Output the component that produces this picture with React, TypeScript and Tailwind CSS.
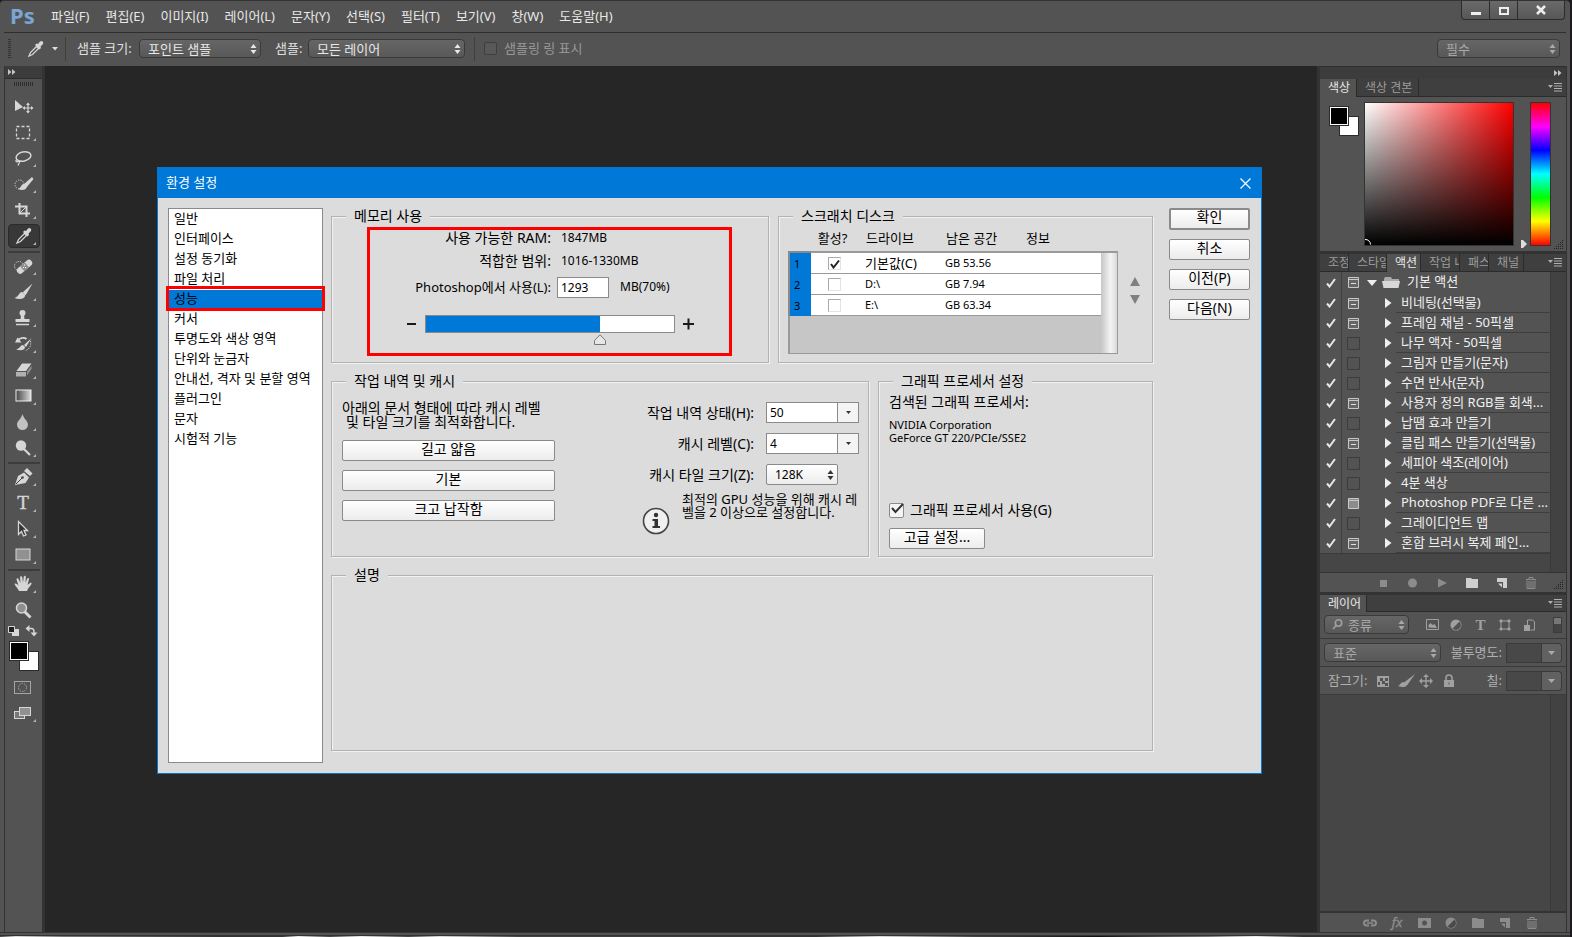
import React, { useState } from 'react';

const menus = ['파일(F)', '편집(E)', '이미지(I)', '레이어(L)', '문자(Y)', '선택(S)', '필터(T)', '보기(V)', '창(W)', '도움말(H)'];

const categories = [
  '일반', '인터페이스', '설정 동기화', '파일 처리', '성능', '커서', '투명도와 색상 영역',
  '단위와 눈금자', '안내선, 격자 및 분할 영역', '플러그인', '문자', '시험적 기능',
];

interface Action {
  name: string;
  dialog: 'lines' | 'plain' | 'none';
}

const actions: Action[] = [
  { name: '비네팅(선택물)', dialog: 'lines' },
  { name: '프레임 채널 - 50픽셀', dialog: 'lines' },
  { name: '나무 액자 - 50픽셀', dialog: 'none' },
  { name: '그림자 만들기(문자)', dialog: 'none' },
  { name: '수면 반사(문자)', dialog: 'none' },
  { name: '사용자 정의 RGB를 회색...', dialog: 'lines' },
  { name: '납땜 효과 만들기', dialog: 'none' },
  { name: '클립 패스 만들기(선택물)', dialog: 'lines' },
  { name: '세피아 색조(레이어)', dialog: 'none' },
  { name: '4분 색상', dialog: 'none' },
  { name: 'Photoshop PDF로 다른 ...', dialog: 'plain' },
  { name: '그레이디언트 맵', dialog: 'none' },
  { name: '혼합 브러시 복제 페인...', dialog: 'lines' },
];

const disks = [
  { name: '기본값(C)', free: 'GB 53.56', active: true },
  { name: 'D:\\', free: 'GB 7.94', active: false },
  { name: 'E:\\', free: 'GB 63.34', active: false },
];

const L = '#d6d6d6';

// Tool drawings, all on a 32x26 grid
const toolIcons: Record<string, React.ReactNode> = {
  move: (
    <>
      <path d="M7 7v11l8-4z" fill={L} />
      <path d="M20 10.500v9M15.500 15h9" stroke={L} strokeWidth="1.200" />
      <path d="M20 9.500l-2 2.500h4zM20 20.500l-2-2.500h4zM14.500 15l2.500-2v4zM25.500 15l-2.500-2v4z" fill={L} />
    </>
  ),
  marquee: <rect x="8.500" y="7.500" width="13" height="12" fill="none" stroke={L} strokeWidth="1.300" strokeDasharray="3 2" />,
  lasso: (
    <>
      <ellipse cx="15.500" cy="11.500" rx="7.500" ry="4.500" transform="rotate(-12 15.500 11.500)" fill="none" stroke={L} strokeWidth="1.500" />
      <path d="M9 14.500c-2 1-1 3 1 2s2 0 0 4" fill="none" stroke={L} strokeWidth="1.300" />
    </>
  ),
  quick: (
    <>
      <circle cx="11.500" cy="13.500" r="4.500" fill="none" stroke={L} strokeDasharray="1.200 1.200" />
      <path d="M24 6l-8.500 7.500 3 3 7-8.500z" fill={L} />
      <path d="M16 13c-3 0-2 3-6 5 5 2 9.500 .5 8.500-3z" fill={L} />
    </>
  ),
  crop: (
    <>
      <path d="M11.500 6v10.500H22M7 9.500h11.500V20" fill="none" stroke={L} strokeWidth="2" />
      <path d="M12 16l6-6" stroke={L} />
    </>
  ),
  eyedropper: (
    <>
      <path d="M9 20l1.500-3.500 6-6 2 2-6 6z" fill="none" stroke={L} strokeWidth="1.300" />
      <path d="M15 9l1.500-1.500L18 8l2-2.500c2-1.500 4 .5 3 2.500L20.500 10.500l.5 1.500-1.500 1.500z" fill={L} />
    </>
  ),
  heal: (
    <>
      <circle cx="11" cy="13" r="4.500" fill="none" stroke={L} strokeDasharray="1.200 1.200" />
      <rect x="7.500" y="10.500" width="18" height="6.500" rx="3.200" transform="rotate(-40 16.500 13.700)" fill={L} />
      <rect x="13.500" y="10.500" width="6" height="6.500" transform="rotate(-40 16.500 13.700)" fill="#8e8e8e" />
      <path d="M16 12h1M17 14.500h1M15 14.500h1" stroke="#fff" />
    </>
  ),
  brush: (
    <>
      <path d="M24.500 4.500L14.500 13.500l3 3z" fill={L} />
      <path d="M14 13c-3 0-3 4.500-7.500 6 4.500 2 11 1 10.500-3z" fill={L} />
    </>
  ),
  stamp: (
    <>
      <circle cx="14.500" cy="8" r="3" fill={L} />
      <path d="M13 10h3l.5 4h5v3h-14v-3h5z" fill={L} />
      <path d="M8 19.500h13" stroke={L} strokeWidth="1.500" />
    </>
  ),
  history: (
    <>
      <path d="M23.500 7l-7.500 7 2 2z" fill={L} />
      <path d="M15 14c-2.500 0-2.500 3-7 4.500 4 1.500 9 1 9-2.500z" fill={L} />
      <path d="M10 9c3-3 7-2.500 8.500-1" fill="none" stroke={L} strokeWidth="1.800" />
      <path d="M7 11.500h6.500l-4-5z" fill={L} />
      <path d="M22.500 10c1 4-1 9-5.500 9.500" fill="none" stroke={L} strokeDasharray="1.200 1.200" />
    </>
  ),
  eraser: (
    <>
      <path d="M14 6.500h9.500l-5.500 7.500H8.500z" fill={L} />
      <path d="M8 15h10v4.500H8z" fill="#b0b0b0" />
      <path d="M19 14.500l4.500-6v3.500l-4.500 6.500z" fill="#8e8e8e" />
    </>
  ),
  gradient: (
    <>
      <defs>
        <linearGradient id="toolGrad"><stop offset="0" stopColor="#444" /><stop offset="1" stopColor="#ddd" /></linearGradient>
      </defs>
      <rect x="8" y="7" width="15" height="11" fill="url(#toolGrad)" stroke="#eee" />
    </>
  ),
  blur: <path d="M14.500 5c1 4.500 5.500 7 5.500 10.500a5.500 5.500 0 0 1-11 0c0-3.500 4.500-6 5.500-10.500z" fill="#c2c2c2" />,
  dodge: (
    <>
      <circle cx="13" cy="10.500" r="5.200" fill={L} />
      <path d="M16 14l6 6" stroke={L} strokeWidth="2.200" />
    </>
  ),
  pen: (
    <>
      <path d="M7 21l3-9 6-3.500 5 5-3.500 5.500z" fill={L} />
      <path d="M16 7l3-3 5.500 5.500-2.500 2.500z" fill={L} />
      <path d="M8 20l6-6" stroke="#444" />
      <circle cx="14.500" cy="13.500" r="1.300" fill="#444" />
    </>
  ),
  path: <path d="M10.500 5.500v13l3-3 2 4.500 2.500-1-2-4.500h3.500z" fill="#333" stroke={L} strokeWidth="1.300" />,
  rect: <rect x="8" y="7" width="14" height="11" fill="#919191" stroke={L} />,
  hand: (
    <path
      d="M11 20c-1-3-4-5-4.500-7 1-1 2.500 0 4 1.500L8.500 8.500c0-1.500 1.500-1.500 2-.5l2 4L12 6c.5-1.300 2-1 2.200 0l.8 5.500.8-6c.5-1 2-1 2 .3L17.500 12l1.700-4.500c.7-1 2-.5 1.800.5l-1.500 6 2.500-2c1-.5 2 0 1.500 1-2 3-3.500 4-4.500 7z"
      fill={L}
    />
  ),
  zoom: (
    <>
      <path d="M16.500 14.500l6 6" stroke={L} strokeWidth="3" />
      <circle cx="13.500" cy="11" r="5" fill="#8e8e8e" stroke={L} strokeWidth="1.600" />
    </>
  ),
  mask: (
    <>
      <rect x="6.500" y="7.500" width="16" height="12" fill="none" stroke="#a5a5a5" />
      <circle cx="14.500" cy="13.500" r="4" fill="none" stroke="#a5a5a5" strokeDasharray="1.500 1" />
    </>
  ),
  screen: (
    <>
      <rect x="6.500" y="11.500" width="10" height="7" fill="#777" stroke={L} />
      <rect x="11.500" y="7.500" width="11" height="8" fill="#919191" stroke={L} />
    </>
  ),
};

const toolGroups = [
  ['move', 'marquee', 'lasso', 'quick', 'crop', 'eyedropper'],
  ['heal', 'brush', 'stamp', 'history', 'eraser', 'gradient', 'blur', 'dodge'],
  ['pen', 'type', 'path', 'rect'],
  ['hand', 'zoom'],
];
const noCorner = ['move', 'zoom', 'mask'];

function Tool({ name, active }: { name: string; active?: boolean }) {
  return (
    <button aria-label={name} className="relative flex h-[26px] w-8 items-center justify-center">
      {active && <span className="absolute inset-x-0 top-px bottom-px rounded-sm border border-[#2b2b2b] bg-[#383838]" />}
      <svg className="relative" width="32" height="26" viewBox="0 0 32 26">
        {name === 'type' ? (
          <text x="15" y="19" textAnchor="middle" fontSize="19" fill={L} stroke={L} strokeWidth="0.400" fontFamily="Liberation Serif, serif">T</text>
        ) : (
          toolIcons[name]
        )}
        {!noCorner.includes(name) && <path d="M28 19v3h-3z" fill="#b5b5b5" />}
      </svg>
    </button>
  );
}

function UpDown({ className = '' }: { className?: string }) {
  return (
    <svg className={`pointer-events-none absolute top-1/2 -translate-y-1/2 ${className}`} width="7" height="10" viewBox="0 0 7 10" fill="currentColor">
      <path d="M3.500 0l3 4h-6zM3.500 10l3-4h-6z" />
    </svg>
  );
}

interface DarkSelectProps {
  label: string;
  value: string;
  className: string;
  dim?: boolean;
  pad?: string;
}

function DarkSelect({ label, value, className, dim, pad = 'pl-2' }: DarkSelectProps) {
  return (
    <span className={`relative ${className} ${dim ? 'text-[#a8a8a8]' : 'text-[#e8e8e8]'}`}>
      <select
        id={label}
        aria-label={label}
        className={`block h-[19px] w-full appearance-none rounded-sm border border-[#3a3a3a] bg-linear-to-b from-[#666] to-[#585858] pr-4 text-[13px] leading-4 ${pad}`}
      >
        <option>{value}</option>
      </select>
      <UpDown className="right-1" />
    </span>
  );
}

function PanelMenu() {
  return (
    <button aria-label="패널 메뉴" className="mr-1 ml-auto self-center">
      <svg width="14" height="9" viewBox="0 0 14 9">
        <path d="M0 2h5L2.500 5z" fill="#b0b0b0" />
        <path d="M6 .5h8M6 3h8M6 5.500h8M6 8h8" stroke="#b0b0b0" />
      </svg>
    </button>
  );
}

function Grip() {
  return (
    <svg width="10" height="10" viewBox="0 0 10 10" fill="#222">
      {[0, 1, 2, 3, 4].map(r => Array.from({ length: r + 1 }, (_, c) => <rect key={`${r}-${c}`} x={8 - c * 2} y={r * 2} width="1" height="1" />))}
    </svg>
  );
}

function FooterIcon({ kind, bright }: { kind: string; bright?: boolean }) {
  const c = bright ? '#cfcfcf' : '#8c8c8c';
  return (
    <button aria-label={kind} className="flex w-[27px] justify-center">
      <svg className="overflow-visible" width="16" height="14" viewBox="0 0 16 14">
        {kind === 'stop' && <path d="M4 4h7v7H4z" fill={c} />}
        {kind === 'record' && <circle cx="7.500" cy="7" r="4.500" fill={c} />}
        {kind === 'play' && <path d="M3 2.500v9L12 7z" fill={c} />}
        {kind === 'folder' && <path d="M1 2h5l1 1h6v9H1z" fill={c} />}
        {kind === 'new' && (
          <>
            <path d="M2 2h10v10H8V6H2z" fill={c} />
            <path d="M3 7.500h4v4z" fill={c} />
          </>
        )}
        {kind === 'trash' && <path d="M2 3.500h10M5 3V1.500h4V3M3 4.500v8h8v-8M5 5v7M7 5v7M9 5v7" fill="none" stroke={c} />}
        {kind === 'link' && (
          <>
            <path d="M6 4.500H3.500a2.500 2.500 0 0 0 0 5H6M8 4.500h2.500a2.500 2.500 0 0 1 0 5H8" fill="none" stroke={c} strokeWidth="2" />
            <path d="M4 7h6" stroke={c} strokeWidth="1.500" />
          </>
        )}
        {kind === 'fx' && (
          <text x="7" y="11" textAnchor="middle" fontSize="13" fontStyle="italic" fill={c} stroke={c} strokeWidth="0.400" fontFamily="Noto Sans, sans-serif">fx</text>
        )}
        {kind === 'mask' && <path fillRule="evenodd" d="M1 2h13v10H1zM7.500 4.500a2.500 2.500 0 1 0 .01 0z" fill={c} />}
        {kind === 'adjust' && (
          <>
            <circle cx="7" cy="7" r="5.500" fill={c} />
            <path d="M10.500 3.500L3.500 10.500a4.500 4.500 0 0 0 7-7z" fill="#4a4a4a" />
          </>
        )}
      </svg>
    </button>
  );
}

function Swatches({ className = '' }: { className?: string }) {
  return (
    <div className={`relative h-[30px] w-[30px] ${className}`}>
      <span className="absolute right-0 bottom-0 size-5 border border-[#2b2b2b] bg-white" />
      <span className="absolute top-0 left-0 size-5 border border-[#2b2b2b] bg-black ring-1 ring-white ring-inset" />
    </div>
  );
}

function Toolbar() {
  return (
    <aside className="flex w-[41px] shrink-0 flex-col border-r-3 border-l border-[#333] bg-[#535353]">
      <div className="flex h-[13px] items-center border-b border-[#2e2e2e] bg-[#3c3c3c] pl-[3px]">
        <svg width="8" height="6" viewBox="0 0 8 6" fill="#c4c4c4"><path d="M0 0v6l3.500-3zM4 0v6l3.500-3z" /></svg>
      </div>
      <div className="mx-auto mt-[3px] h-1 w-5 bg-[repeating-linear-gradient(90deg,#2e2e2e_0_1px,#535353_1px_2px)]" />
      <div className="flex flex-col items-center pt-[7px]">
        {toolGroups.map((group, i) => (
          <div key={i} className={i > 0 ? 'mt-px border-t-2 border-[#3c3c3c]' : 'mb-px'}>
            {group.map(t => <Tool key={t} name={t} active={t === 'eyedropper'} />)}
          </div>
        ))}
        <svg width="32" height="15" viewBox="0 0 32 15">
          <path d="M4 6h7v7H4z" fill={L} />
          <path d="M.5 3.500h6v6h-6z" fill="#222" stroke={L} />
          <path d="M20 5.500h3.500q2.500 0 2.500 3V11" fill="none" stroke={L} strokeWidth="1.400" />
          <path d="M17.500 5.500l4-3.500v7zM26 13.500l3.500-4h-7z" fill={L} />
        </svg>
        <Swatches className="mt-[3px]" />
        <div className="mt-[3px] flex flex-col">
          <Tool name="mask" />
          <Tool name="screen" />
        </div>
      </div>
    </aside>
  );
}

function Tab({ text, active, width }: { text: string; active?: boolean; width: string }) {
  return (
    <button
      className={`overflow-hidden border-r border-[#2b2b2b] pl-2 text-left text-xs leading-4 whitespace-nowrap ${width} ${
        active ? 'bg-[#535353] text-[#e8e8e8]' : 'border-b text-[#9c9c9c]'
      }`}
    >
      {text}
    </button>
  );
}

function ColorPanel() {
  return (
    <section className="bg-[#535353]">
      <div className="flex h-[18px] bg-[#3f3f3f]">
        <Tab text="색상" active width="w-[37px]" />
        <Tab text="색상 견본" width="w-[62px]" />
        <div className="flex flex-1 border-b border-[#2b2b2b]"><PanelMenu /></div>
      </div>
      <div className="flex h-[154px] pt-[5px] pl-[9px]">
        <Swatches className="mt-1" />
        <div className="relative ml-[5px] h-[144px] flex-1 border border-[#333] bg-[linear-gradient(to_top,#000,transparent),linear-gradient(to_right,#fff,#f00)]">
          <svg className="absolute bottom-0 left-0" width="7" height="7" viewBox="0 0 7 7"><path d="M0 1.500a5 5 0 0 1 5.500 5" fill="none" stroke="#fff" /></svg>
        </div>
        <svg className="ml-[6px] self-end" width="8" height="12" viewBox="0 0 8 12"><path d="M1 1h2l4 4-4 4H1z" fill="#ddd" /></svg>
        <div className="ml-[2px] h-[144px] w-[21px] border border-[#333] bg-[linear-gradient(#f00,#f0f,#00f,#0ff,#0f0,#ff0,#f00)]" />
        <div className="mb-px flex w-[15px] items-end justify-end pr-0.5"><Grip /></div>
      </div>
    </section>
  );
}

function ActionToggles({ name, dialog }: Action) {
  return (
    <>
      <label className="relative flex w-[22px] shrink-0 items-center justify-center border-r border-[#3e3e3e]">
        <input type="checkbox" defaultChecked aria-label={name} className="size-3 appearance-none" />
        <svg className="pointer-events-none absolute" width="10" height="10" viewBox="0 0 10 10">
          <path d="M1 5.500l2.500 3L9 1" fill="none" stroke="#e6e6e6" strokeWidth="2" />
        </svg>
      </label>
      <button aria-label={`${name} 대화 상자`} className="flex w-[22px] shrink-0 items-center justify-center">
        <svg width="13" height="13" viewBox="0 0 13 13">
          {dialog === 'none' ? (
            <path d="M.5.5h12v12H.5z" fill="none" stroke="#3c3c3c" />
          ) : (
            <>
              <path d="M1.500 1.500h10v10h-10z" fill={dialog === 'plain' ? '#8c8c8c' : '#666'} stroke="#c8c8c8" />
              <path d="M1.500 3.500h10" stroke="#c8c8c8" />
              {dialog === 'lines' && <path d="M4 7.500h5" stroke="#e0e0e0" />}
            </>
          )}
        </svg>
      </button>
    </>
  );
}

function ActionsPanel() {
  return (
    <section className="bg-[#535353]">
      <div className="flex h-[18px] bg-[#3f3f3f]">
        <Tab text="조정" width="w-[29px]" />
        <Tab text="스타일" width="w-[38px]" />
        <Tab text="액션" active width="w-[34px]" />
        <Tab text="작업 내역" width="w-[39px]" />
        <Tab text="패스" width="w-[29px]" />
        <Tab text="채널" width="w-[35px]" />
        <div className="flex flex-1 border-b border-[#2b2b2b]"><PanelMenu /></div>
      </div>
      <div className="flex h-[300px] bg-[#464646]">
        <div className="flex-1">
          <ul className="border-b border-[#3a3a3a] bg-[#535353] text-[13px] leading-[19px] text-[#f0f0f0]">
            <li className="flex h-[21px]">
              <ActionToggles name="기본 액션" dialog="lines" />
              <svg className="mt-[5px] ml-[3px]" width="36" height="12" viewBox="0 0 36 12">
                <path d="M0 3h10L5 9z" fill="#eee" />
                <path d="M17 2l1-2h6l1 2h7v2H17z" fill="#aaa" />
                <path d="M15 4h18l-1.500 7h-15z" fill="#d8d8d8" />
              </svg>
              <span className="pl-1">기본 액션</span>
            </li>
            {actions.map(a => (
              <li key={a.name} className="flex h-5">
                <ActionToggles {...a} />
                <svg className="mt-[5px] ml-[21px]" width="7" height="10" viewBox="0 0 7 10"><path d="M0 0v10l6.500-5z" fill="#eee" /></svg>
                <span className="ml-1 flex-1 border-b border-[#3e3e3e] pl-[5px] whitespace-nowrap">{a.name}</span>
              </li>
            ))}
          </ul>
        </div>
        <div className="w-4 border-l border-[#3a3a3a] bg-[#424242]" />
      </div>
      <div className="flex h-5 items-center border-t border-[#333]">
        <div className="ml-[50px] flex flex-1 justify-between">
          <FooterIcon kind="stop" />
          <FooterIcon kind="record" />
          <FooterIcon kind="play" />
          <FooterIcon kind="folder" bright />
          <FooterIcon kind="new" bright />
          <FooterIcon kind="trash" />
        </div>
        <div className="ml-2 flex h-full w-3 items-end pb-0.5"><Grip /></div>
      </div>
    </section>
  );
}

function Percent({ label, id }: { label: string; id: string }) {
  return (
    <div className="ml-auto flex items-center">
      <label htmlFor={id} className="mr-1 text-[13px] text-[#b0b0b0]">{label}</label>
      <input id={id} className="h-5 w-9 border border-[#3a3a3a] bg-[#484848]" />
      <button aria-label={`${label} 열기`} className="flex h-5 w-5 items-center justify-center rounded-r-sm border border-l-0 border-[#3a3a3a] bg-[#616161]">
        <svg width="7" height="4" viewBox="0 0 7 4"><path d="M0 0h7L3.500 4z" fill="#aaa" /></svg>
      </button>
    </div>
  );
}

function LayersPanel() {
  const g = '#a0a0a0';
  return (
    <section className="flex flex-1 flex-col bg-[#535353]">
      <div className="flex h-[17px] shrink-0 bg-[#3f3f3f]">
        <Tab text="레이어" active width="w-[47px]" />
        <div className="flex flex-1 border-b border-[#2b2b2b]"><PanelMenu /></div>
      </div>
      <div className="flex h-[26px] shrink-0 items-center px-1 pb-px">
        <div className="relative text-[#a8a8a8]">
          <DarkSelect label="필터 종류" value="종류" className="block w-[85px]" dim pad="pl-[23px]" />
          <svg className="pointer-events-none absolute top-1 left-2" width="11" height="11" viewBox="0 0 11 11" fill="none" stroke={g} strokeWidth="1.600">
            <circle cx="6.500" cy="4" r="3.200" />
            <path d="M4 6.500L1 10" />
          </svg>
        </div>
        <svg className="ml-[17px]" width="110" height="14" viewBox="0 0 110 14" fill="none" stroke={g}>
          <path d="M.5 1.500h12v10H.5z" />
          <path d="M2.500 9.500V7l2-2 2 2 2-1 2 3v1z" fill={g} stroke="none" />
          <circle cx="30" cy="7" r="5.500" fill={g} stroke="none" />
          <path d="M33.500 3.500L26.500 10.500a4.500 4.500 0 0 0 7-7z" fill="#535353" stroke="none" />
          <text x="54.500" y="12" textAnchor="middle" fontSize="15" fontWeight="bold" fill={g} stroke="none" fontFamily="Liberation Serif, serif">T</text>
          <path d="M75 3h8v8h-8z" />
          <path d="M74 2h2v2h-2zM82 2h2v2h-2zM74 10h2v2h-2zM82 10h2v2h-2z" fill={g} />
          <path d="M101.500 7V2h5l2 2v8h-4" />
          <path d="M98 7h6v6h-6z" fill={g} stroke="none" />
        </svg>
        <button aria-label="필터 켜기/끄기" className="ml-auto h-4 w-[9px] border border-[#3c3c3c] bg-[linear-gradient(#777_45%,#444_45%)]" />
      </div>
      <div className="flex h-7 shrink-0 items-center border-t border-[#3a3a3a] px-1">
        <DarkSelect label="혼합 모드" value="표준" className="block w-[117px]" dim />
        <Percent label="불투명도:" id="opacity" />
      </div>
      <div className="flex h-[29px] shrink-0 items-center border-y border-[#3a3a3a] px-1">
        <span className="pl-1 text-[13px] text-[#b0b0b0]">잠그기:</span>
        <svg className="ml-2.5" width="80" height="14" viewBox="0 0 80 14" fill={g}>
          <path d="M0 2h12v11H0z" />
          <path d="M3 4h3v3H3zM8 4h3v3H8zM5 7h3v3H5zM1 8h2v3H1zM8 9h3v3H8z" fill="#535353" />
          <path d="M38 0L27 8.500l3 3zM26.500 8c-3 0-3 3-5.500 4 4 2 9.500 1 8.500-1.500z" />
          <path d="M49 1v12M43 7h12" stroke={g} strokeWidth="1.300" />
          <path d="M49 0l-3 3h6zM49 14l-3-3h6zM42 7l3-3v6zM56 7l-3-3v6z" />
          <path fillRule="evenodd" d="M67 6h10v7H67zM71.500 8.500v2h1v-2z" />
          <path d="M69 6V4a3 3 0 0 1 6 0v2" fill="none" stroke={g} strokeWidth="1.600" />
        </svg>
        <Percent label="칠:" id="fill" />
      </div>
      <div className="flex flex-1 justify-end bg-[#464646]">
        <div className="w-4 border-l border-[#3a3a3a] bg-[#424242]" />
      </div>
      <div className="flex h-[21px] shrink-0 items-center border-t-2 border-[#333] pl-[37px]">
        {['link', 'fx', 'mask', 'adjust', 'folder', 'new', 'trash'].map(k => <FooterIcon key={k} kind={k} />)}
      </div>
    </section>
  );
}

function Group({ title, className = '', children }: { title: string; className?: string; children?: React.ReactNode }) {
  return (
    <fieldset className={`min-w-0 border border-[#b2b2b2] shadow-[1px_1px_0_#f2f2f2,inset_1px_1px_0_#f2f2f2] ${className}`}>
      <legend className="ml-3.5 bg-[#dcdcdc] px-2 text-sm leading-4">{title}</legend>
      {children}
    </fieldset>
  );
}

const lightBtn = 'flex items-center justify-center rounded-[2px] border border-[#8a8a8a] bg-linear-to-b from-white to-[#ececec] pb-1 text-sm leading-4';

function Combo({ id, label, value }: { id: string; label: string; value: string }) {
  return (
    <div className="flex items-center justify-end">
      <label htmlFor={id} className="mr-3 text-sm leading-5">{label}</label>
      <input id={id} defaultValue={value} className="h-[21px] w-[72px] border border-[#8a8a8a] bg-white px-[3px] text-xs" />
      <button aria-label={`${label} 열기`} className="flex h-[21px] w-[21px] items-center justify-center border border-l-0 border-[#8a8a8a] bg-[#f4f4f4]">
        <svg width="5" height="3" viewBox="0 0 5 3"><path d="M0 0h5L2.500 3z" fill="#333" /></svg>
      </button>
    </div>
  );
}

function MemoryGroup() {
  const [used, setUsed] = useState(70);
  return (
    <Group title="메모리 사용" className="relative h-[155px] w-[438px]">
      <div className="pointer-events-none absolute top-[3px] left-[35px] h-[129px] w-[365px] border-3 border-[#f00]" />
      <div className="grid grid-cols-[219px_1fr] items-center gap-x-2.5 pt-0.5">
        <span className="text-right text-sm leading-[23px]">사용 가능한 RAM:</span>
        <span className="text-xs">1847MB</span>
        <span className="text-right text-sm leading-[23px]">적합한 범위:</span>
        <span className="text-xs">1016-1330MB</span>
        <label htmlFor="ram" className="text-right text-[13px] leading-[30px]">Photoshop에서 사용(L):</label>
        <span className="-ml-1 flex items-center text-xs">
          <input id="ram" defaultValue="1293" className="mr-[11px] h-[21px] w-[52px] border border-[#8a8a8a] bg-white px-[3px]" />
          MB(70%)
        </span>
      </div>
      <div className="mt-[13px] ml-[74px] flex items-center gap-2">
        <button aria-label="줄이기" onClick={() => setUsed(Math.max(0, used - 1))}>
          <svg width="11" height="12" viewBox="0 0 11 12"><path d="M1 6h9" stroke="#1a1a1a" strokeWidth="2" /></svg>
        </button>
        <div className="relative">
          <input
            type="range"
            aria-label="Photoshop에서 사용"
            value={used}
            onChange={e => setUsed(Number(e.target.value))}
            className="block h-[18px] w-[250px] appearance-none border border-[#8a8a8a] [&::-webkit-slider-thumb]:opacity-0"
            style={{ background: `linear-gradient(to right, #0078d7 ${used}%, #fff ${used}%)` }}
          />
          <svg className="pointer-events-none absolute top-[19px] -translate-x-1/2" style={{ left: `${used}%` }} width="12" height="11" viewBox="0 0 12 11">
            <path d="M.5 10.500v-4L6 .8l5.500 5.700v4z" fill="#e6e6e6" stroke="#777" />
          </svg>
        </div>
        <button aria-label="늘리기" onClick={() => setUsed(Math.min(100, used + 1))}>
          <svg width="11" height="12" viewBox="0 0 11 12"><path d="M0 6h11M5.500.5v11" stroke="#1a1a1a" strokeWidth="2" /></svg>
        </button>
      </div>
    </Group>
  );
}

function DiskGroup() {
  return (
    <Group title="스크래치 디스크" className="h-[155px] w-[375px]">
      <div className="flex pt-1 pl-[9px]">
        <table className="w-[330px] table-fixed border-separate border-spacing-0 text-[11px]">
          <colgroup>
            <col className="w-[23px]" />
            <col className="w-[47px]" />
            <col className="w-20" />
            <col className="w-20" />
            <col />
            <col className="w-[17px]" />
          </colgroup>
          <thead className="text-[13px] leading-5">
            <tr className="h-[23px] align-top">
              <td />
              <th className="pr-1 font-normal whitespace-nowrap">활성?</th>
              <th className="pl-2 text-left font-normal">드라이브</th>
              <th className="pl-2 text-left font-normal">남은 공간</th>
              <th className="pl-2 text-left font-normal">정보</th>
              <td />
            </tr>
          </thead>
          <tbody>
            {disks.map((d, i) => (
              <tr key={d.name} className={`bg-white leading-4 ${i === 0 ? 'h-[23px]' : 'h-[21px]'}`}>
                <th scope="row" className={`border-l-2 border-[#8a8a8a] bg-[#0078d7] pl-1 text-left font-normal ${i === 0 ? 'border-t-2' : ''}`}>{i + 1}</th>
                <td className={`border-b border-[#9a9a9a] ${i === 0 ? 'border-t-2' : ''}`}>
                  <label className="relative mx-auto block size-[13px]">
                    <input type="checkbox" defaultChecked={d.active} aria-label={d.name} className="block size-[13px] appearance-none border border-t-[#aaa] border-r-[#e4e4e4] border-b-[#e4e4e4] border-l-[#aaa]" />
                    {d.active && (
                      <svg className="pointer-events-none absolute top-0.5 left-0.5" width="10" height="10" viewBox="0 0 10 10"><path d="M1 5l2.500 3.500L9 1.500" fill="none" stroke="#222" strokeWidth="2" /></svg>
                    )}
                  </label>
                </td>
                <td className={`border-b border-[#9a9a9a] pl-[7px] ${i === 0 ? 'border-t-2 text-[13px]' : ''}`}>{d.name}</td>
                <td className={`border-b border-[#9a9a9a] pl-[7px] ${i === 0 ? 'border-t-2' : ''}`}>{d.free}</td>
                <td className={`border-b border-[#9a9a9a] ${i === 0 ? 'border-t-2' : ''}`} />
                {i === 0 && <td rowSpan={4} className="border border-t-2 border-l-0 border-[#9a9a9a] bg-[linear-gradient(to_right,#c6c6c6,#f4f4f4_60%,#d8d8d8)]" />}
              </tr>
            ))}
            <tr className="h-[38px] bg-[#c6c6c6]">
              <td colSpan={5} className="border-b border-l-2 border-[#9a9a9a]" />
            </tr>
          </tbody>
        </table>
        <div className="mt-[49px] ml-3 flex flex-col gap-[9px] text-[#808080]">
          <button aria-label="위로"><svg width="10" height="9" viewBox="0 0 10 9" fill="currentColor"><path d="M5 0l5 9H0z" /></svg></button>
          <button aria-label="아래로"><svg width="10" height="9" viewBox="0 0 10 9" fill="currentColor"><path d="M5 9l5-9H0z" /></svg></button>
        </div>
      </div>
    </Group>
  );
}

function HistoryGroup() {
  return (
    <Group title="작업 내역 및 캐시" className="h-[184px] w-[538px]">
      <div className="flex justify-between pr-[9px] pl-2.5">
        <div className="w-[213px] pt-3">
          <p className="text-sm leading-3.5 whitespace-nowrap">아래의 문서 형태에 따라 캐시 레벨</p>
          <p className="pl-1 text-sm leading-3.5 whitespace-nowrap">및 타일 크기를 최적화합니다.</p>
          <div className="mt-[11px] flex flex-col gap-[9px]">
            <button className={`${lightBtn} h-[21px]`}>길고 얇음</button>
            <button className={`${lightBtn} h-[21px]`}>기본</button>
            <button className={`${lightBtn} h-[21px]`}>크고 납작함</button>
          </div>
        </div>
        <div className="flex w-[220px] flex-col gap-2.5 pt-[13px]">
          <Combo id="states" label="작업 내역 상태(H):" value="50" />
          <Combo id="levels" label="캐시 레벨(C):" value="4" />
          <div className="flex items-center justify-end pr-[21px]">
            <label htmlFor="tile" className="mr-3 text-sm leading-5">캐시 타일 크기(Z):</label>
            <span className="relative">
              <select id="tile" className="block h-[21px] w-[72px] appearance-none rounded-[2px] border border-[#8a8a8a] bg-linear-to-b from-white to-[#ececec] pl-2 text-xs">
                <option>128K</option>
              </select>
              <UpDown className="right-1 text-[#333]" />
            </span>
          </div>
          <div className="-mt-0.5 flex gap-3 pl-[3px]">
            <svg className="mt-3.5 shrink-0" width="28" height="28" viewBox="0 0 28 28">
              <circle cx="14" cy="14" r="12.500" fill="#f0f0f0" stroke="#444" strokeWidth="1.600" />
              <circle cx="14" cy="8" r="2.200" fill="#333" />
              <path d="M10.500 12H16v7h2v2h-7.500v-2h2v-5h-2z" fill="#333" />
            </svg>
            <p className="text-[13px] leading-[13px] whitespace-nowrap">최적의 GPU 성능을 위해 캐시 레<br />벨을 2 이상으로 설정합니다.</p>
          </div>
        </div>
      </div>
    </Group>
  );
}

function GpuGroup() {
  return (
    <Group title="그래픽 프로세서 설정" className="h-[184px] w-[275px]">
      <div className="flex h-[168px] flex-col items-start pt-1 pb-2 pl-2.5">
        <span className="text-sm leading-[18px]">검색된 그래픽 프로세서:</span>
        <p className="mt-[7px] text-[11px] leading-[13px]">NVIDIA Corporation<br />GeForce GT 220/PCIe/SSE2</p>
        <label className="relative mt-auto flex items-center gap-1.5 text-sm leading-5">
          <input type="checkbox" defaultChecked className="size-[15px] appearance-none rounded-[2px] border border-[#8a8a8a] bg-[#f4f4f4]" />
          <svg className="pointer-events-none absolute top-[3px] left-0.5" width="13" height="12" viewBox="0 0 13 12"><path d="M1 5l3.500 4L12 1" fill="none" stroke="#333" strokeWidth="2" /></svg>
          그래픽 프로세서 사용(G)
        </label>
        <button className={`${lightBtn} mt-2 h-[21px] w-24`}>고급 설정...</button>
      </div>
    </Group>
  );
}

function PreferencesDialog() {
  const [selected, setSelected] = useState('성능');
  return (
    <div role="dialog" aria-label="환경 설정" className="absolute top-[167px] left-[157px] w-[1105px] border border-[#0078d7] bg-[#dcdcdc] text-black">
      <div className="flex h-[30px] items-center justify-between bg-[#0078d7] pr-2.5 pl-2 text-[13px] text-white">
        환경 설정
        <button aria-label="닫기"><svg width="11" height="11" viewBox="0 0 11 11"><path d="M.5.5l10 10M10.500.5l-10 10" stroke="#fff" strokeWidth="1.200" /></svg></button>
      </div>
      <div className="flex pt-2.5 pr-[11px] pb-2.5 pl-2.5">
        <ul className="w-[155px] shrink-0 border border-[#8a8a8a] bg-white text-[13px]">
          {categories.map(c => (
            <li key={c} className="relative py-px">
              <button onClick={() => setSelected(c)} className={`flex h-[18px] w-full items-center pb-0.5 pl-[5px] text-left leading-4 whitespace-nowrap ${c === selected ? 'bg-[#0078d7]' : ''}`}>{c}</button>
              {c === selected && <span className="pointer-events-none absolute -inset-x-[3px] -top-[3px] -bottom-0.5 border-3 border-[#f00]" />}
            </li>
          ))}
        </ul>
        <div className="mb-3 ml-2 flex flex-1 flex-col gap-2.5">
          <div className="flex justify-between">
            <MemoryGroup />
            <DiskGroup />
          </div>
          <div className="flex justify-between">
            <HistoryGroup />
            <GpuGroup />
          </div>
          <Group title="설명" className="h-[184px]" />
        </div>
        <div className="ml-4 flex w-[81px] flex-col gap-[9px]">
          <button className={`${lightBtn} h-[22px] border-2`}>확인</button>
          <button className={`${lightBtn} h-[21px]`}>취소</button>
          <button className={`${lightBtn} h-[21px]`}>이전(P)</button>
          <button className={`${lightBtn} h-[21px]`}>다음(N)</button>
        </div>
      </div>
    </div>
  );
}

export default function App() {
  return (
    <div className="relative flex h-screen flex-col overflow-hidden bg-[#1c1a1c] pr-0.5 font-['Noto_Sans','Noto_Sans_CJK_KR',sans-serif]">
      <header className="flex h-8 shrink-0 items-start rounded-t-sm border-t border-[#333] bg-[#535353]">
        <span className="w-[51px] pl-2.5 text-[22px] leading-7 font-bold text-[#7ba5d4]">Ps</span>
        <nav className="flex gap-4 text-[13px] leading-[30px] text-[#e8e8e8]">
          {menus.map(m => <a key={m} href="#" className="whitespace-nowrap">{m}</a>)}
        </nav>
        <div className="mr-[5px] ml-auto flex h-[19px] rounded-b-sm border border-t-0 border-[#2b2b2b] bg-linear-to-b from-[#6a6a6a] to-[#575757]">
          <button aria-label="최소화" className="flex w-7 justify-center border-r border-[#2b2b2b]"><svg width="12" height="18" viewBox="0 0 12 18"><path d="M1 12.500h10" stroke="#eee" strokeWidth="3" /></svg></button>
          <button aria-label="최대화" className="flex w-7 justify-center border-r border-[#2b2b2b]"><svg width="12" height="18" viewBox="0 0 12 18"><path d="M2 7h8v6H2z" fill="none" stroke="#eee" strokeWidth="2" /></svg></button>
          <button aria-label="닫기" className="flex w-[46px] justify-center"><svg width="12" height="18" viewBox="0 0 12 18"><path d="M2 5l8 8M10 5l-8 8" stroke="#eee" strokeWidth="2.500" /></svg></button>
        </div>
      </header>

      <div className="mx-1 flex h-[34px] shrink-0 items-center border-t border-[#2e2e2e] bg-[#535353] pr-1.5 pb-0.5 pl-1 text-[13px] text-[#e0e0e0] outline-4 outline-[#535353]">
        <span className="h-5 w-[3px] bg-[repeating-linear-gradient(#333_0_1px,#535353_1px_2px)]" />
        <svg className="ml-[9px]" width="32" height="26" viewBox="0 0 32 26">{toolIcons.eyedropper}</svg>
        <svg width="7" height="4" viewBox="0 0 7 4"><path d="M0 0h6L3 3.500z" fill="#ddd" /></svg>
        <span className="mx-1.5 h-6 w-px bg-[#3e3e3e]" />
        <label htmlFor="샘플 크기" className="ml-[5px] w-[62px] whitespace-nowrap">샘플 크기:</label>
        <DarkSelect label="샘플 크기" value="포인트 샘플" className="w-[122px]" />
        <label htmlFor="샘플" className="ml-3.5 w-[33px] whitespace-nowrap">샘플:</label>
        <DarkSelect label="샘플" value="모든 레이어" className="w-[157px]" />
        <span className="mx-[9px] h-6 w-px bg-[#3e3e3e]" />
        <label className="flex items-center gap-[7px] text-[#999]">
          <input type="checkbox" className="size-[13px] appearance-none rounded-[2px] border border-[#3e3e3e] bg-[#585858]" />
          샘플링 링 표시
        </label>
        <DarkSelect label="작업 영역" value="필수" className="ml-auto w-[123px]" dim />
      </div>

      <div className="flex min-h-0 flex-1 border-r-3 border-l-4 border-[#535353]">
        <Toolbar />
        <main className="flex-1 bg-[#262626]" />
        <div className="flex w-[250px] flex-col gap-[3px] border-r border-l-3 border-[#333] bg-[#333]">
          <div>
            <div className="flex h-[13px] items-center justify-end border-t border-[#2e2e2e] bg-[#3c3c3c] pr-1">
              <svg width="8" height="6" viewBox="0 0 8 6" fill="#c4c4c4"><path d="M0 0v6l3.500-3zM4 0v6l3.500-3z" /></svg>
            </div>
            <ColorPanel />
          </div>
          <ActionsPanel />
          <LayersPanel />
        </div>
      </div>
      <div className="h-1 shrink-0 border-y border-[#333] bg-[#535353]" />
      <div className="h-px shrink-0 bg-[linear-gradient(90deg,#444,#ddd_1%,#777_4%,#333_14%,#333_18%,#eee_19%,#444_21%,#eee_23%,#444_26%,#ddd_28%,#444_33%,#333_52%,#ddd_56%,#444_62%,#111_70%,#777_77%,#eee_80%,#333_83%)]" />

      <PreferencesDialog />
    </div>
  );
}
